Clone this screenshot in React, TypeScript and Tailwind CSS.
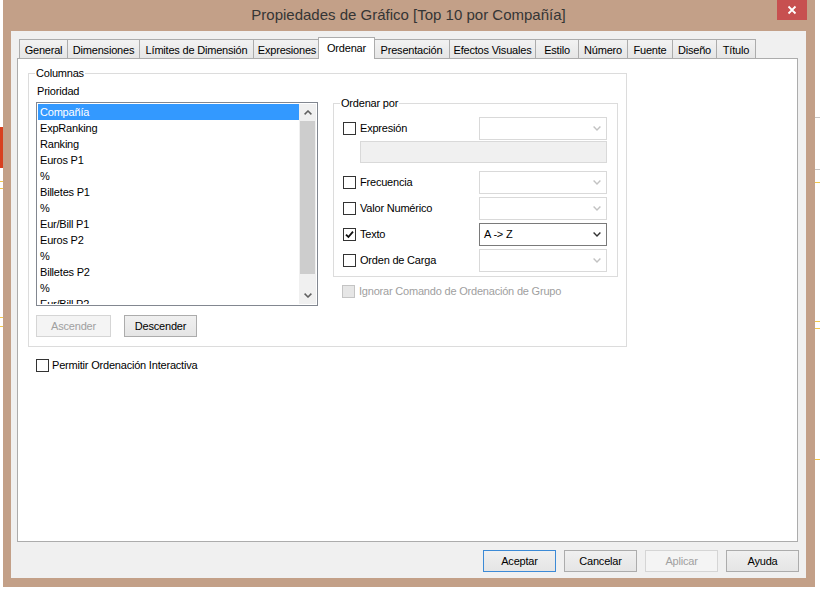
import React from "react";

const tabs: { label: string; w: string; active?: boolean; last?: boolean }[] = [
  { label: "General", w: "w-[48px]" },
  { label: "Dimensiones", w: "w-[72px]" },
  { label: "Límites de Dimensión", w: "w-[114px]" },
  { label: "Expresiones", w: "w-[67px]" },
  { label: "Ordenar", w: "w-[57px]", active: true },
  { label: "Presentación", w: "w-[76px]" },
  { label: "Efectos Visuales", w: "w-[86px]" },
  { label: "Estilo", w: "w-[43px]" },
  { label: "Número", w: "w-[49px]" },
  { label: "Fuente", w: "w-[45px]" },
  { label: "Diseño", w: "w-[44px]" },
  { label: "Título", w: "w-[40px]", last: true },
];

const items = [
  "Compañía",
  "ExpRanking",
  "Ranking",
  "Euros P1",
  "%",
  "Billetes P1",
  "%",
  "Eur/Bill P1",
  "Euros P2",
  "%",
  "Billetes P2",
  "%",
  "Eur/Bill P2",
];

function Checkbox({ checked, disabled }: { checked?: boolean; disabled?: boolean }) {
  return (
    <span
      className={`w-[13px] h-[13px] border shrink-0 flex items-center justify-center ${
        disabled ? "border-[#c4c4c4] bg-[#e6e6e6]" : "border-[#333333] bg-white"
      }`}
    >
      {checked && (
        <svg width="9" height="9" viewBox="0 0 9 9">
          <path d="M1 4.6 L3.4 7 L8 1.6" stroke="#111" strokeWidth="1.8" fill="none" />
        </svg>
      )}
    </span>
  );
}

function Combo({ value, enabled }: { value?: string; enabled?: boolean }) {
  return (
    <div
      className={`w-[128px] h-[23px] bg-white border flex items-center justify-between pl-[4px] pr-[5px] ${
        enabled ? "border-[#7a7a7a]" : "border-[#d9d9d9]"
      }`}
    >
      <span>{value}</span>
      <svg width="8" height="5" viewBox="0 0 8 5">
        <path
          d="M0.6 0.6 L4 4 L7.4 0.6"
          stroke={enabled ? "#333" : "#c2c2c2"}
          strokeWidth="1.4"
          fill="none"
        />
      </svg>
    </div>
  );
}

function SortRow({ label, checked, value }: { label: string; checked?: boolean; value?: string }) {
  return (
    <div className="flex items-center justify-between h-[23px]">
      <div className="flex items-center gap-[4px]">
        <Checkbox checked={checked} />
        <span>{label}</span>
      </div>
      <Combo value={value} enabled={checked} />
    </div>
  );
}

function Btn({
  label,
  w,
  disabled,
  primary,
}: {
  label: string;
  w: string;
  disabled?: boolean;
  primary?: boolean;
}) {
  const cls = disabled
    ? "bg-[#f4f4f4] border-[#d5d5d5] text-[#a0a0a0]"
    : primary
    ? "bg-gradient-to-b from-[#f0f0f0] to-[#e5e5e5] border-[#3c8ad6] text-black"
    : "bg-gradient-to-b from-[#f0f0f0] to-[#e5e5e5] border-[#acacac] text-black";
  return (
    <div className={`${w} h-[22px] border flex items-center justify-center ${cls}`}>{label}</div>
  );
}

export default function App() {
  return (
    <div className="w-[820px] h-[589px] bg-white flex overflow-hidden font-['Liberation_Sans',Arial,sans-serif] text-[11px] tracking-[-0.2px] text-black">
      {/* left sliver of the page behind */}
      <div className="w-[3px] shrink-0 flex flex-col">
        <div className="h-[127px]" />
        <div className="h-[41px] bg-[#d8401f]" />
        <div className="h-[13px]" />
        <div className="h-[1px] bg-[#f2c94c]" />
        <div className="h-[6px]" />
        <div className="h-[1px] bg-[#f2c94c]" />
        <div className="h-[128px]" />
        <div className="h-[1px] bg-[#f2c94c]" />
        <div className="h-[8px]" />
        <div className="h-[1px] bg-[#f2c94c]" />
      </div>

      {/* dialog window */}
      <div className="relative w-[812px] h-[587px] shrink-0 bg-[#c3a088] flex flex-col pl-[8px] pr-[9px] pb-[9px]">
        <div className="h-[31px] flex items-center justify-center text-[15px] tracking-normal text-[#353535]">
          Propiedades de Gráfico [Top 10 por Compañía]
        </div>
        <div className="absolute top-0 right-[8px] w-[30px] h-[20px] bg-[#c75050] flex items-center justify-center">
          <svg width="10" height="10" viewBox="0 0 10 10">
            <path d="M1.5 1.5 L8.5 8.5 M8.5 1.5 L1.5 8.5" stroke="#fff" strokeWidth="1.8" />
          </svg>
        </div>

        {/* client area */}
        <div className="flex-1 bg-[#f0f0f0] flex flex-col pt-[6px] pl-[6px] pr-[8px] pb-[6px]">
          {/* tabs */}
          <div className="h-[21px] flex items-end pl-[2px] relative z-10">
            {tabs.map((t, i) =>
              t.active ? (
                <div
                  key={i}
                  className={`${t.w} h-[22px] -mb-[1px] -mx-[2px] relative z-10 bg-white border border-b-0 border-[#acacac] flex justify-center pt-[4px] leading-[13px]`}
                >
                  {t.label}
                </div>
              ) : (
                <div
                  key={i}
                  className={`${t.w} h-[19px] border-t border-l ${
                    t.last ? "border-r" : ""
                  } border-[#acacac] bg-gradient-to-b from-[#f2f2f2] to-[#e6e6e6] flex items-center justify-center pt-[2px]`}
                >
                  {t.label}
                </div>
              )
            )}
          </div>

          {/* tab page */}
          <div className="h-[484px] bg-white border border-[#acacac] pt-[8px] pl-[10px]">
            <fieldset className="w-[599px] border border-[#dcdcdc] pl-[7px] pr-[8px] pt-[5px] pb-[9px]">
              <legend className="-ml-[1px] px-[1px] leading-[13px]">Columnas</legend>
              <div className="flex items-start gap-[15px]">
                {/* left column */}
                <div className="w-[282px] flex flex-col">
                  <div className="h-[13px] leading-[13px] pl-[1px]">Prioridad</div>
                  <div className="mt-[4px] h-[204px] border border-[#828790] bg-white p-[1px] flex">
                    <div className="flex-1 overflow-hidden">
                      {items.map((it, i) => (
                        <div
                          key={i}
                          className={`h-[16px] leading-[16px] pl-[2px] whitespace-nowrap ${
                            i === 0 ? "bg-[#3399ff] text-white" : ""
                          }`}
                        >
                          {it}
                        </div>
                      ))}
                    </div>
                    <div className="w-[17px] bg-[#f0f0f0] flex flex-col">
                      <div className="h-[17px] flex items-center justify-center">
                        <svg width="8" height="5" viewBox="0 0 8 5">
                          <path d="M0.6 4.4 L4 1 L7.4 4.4" stroke="#606060" strokeWidth="1.5" fill="none" />
                        </svg>
                      </div>
                      <div className="h-[153px] mx-[1px] bg-[#cdcdcd]" />
                      <div className="flex-1" />
                      <div className="h-[17px] flex items-center justify-center">
                        <svg width="8" height="5" viewBox="0 0 8 5">
                          <path d="M0.6 0.6 L4 4 L7.4 0.6" stroke="#606060" strokeWidth="1.5" fill="none" />
                        </svg>
                      </div>
                    </div>
                  </div>
                  <div className="mt-[9px] flex gap-[13px]">
                    <Btn label="Ascender" w="w-[75px]" disabled />
                    <Btn label="Descender" w="w-[73px]" />
                  </div>
                </div>

                {/* right column */}
                <div className="w-[285px] mt-[12px] flex flex-col">
                  <fieldset className="border border-[#dcdcdc] pl-[9px] pr-[10px] pt-[7px] pb-[4px]">
                    <legend className="-ml-[3px] px-[1px] leading-[13px]">Ordenar por</legend>
                    <SortRow label="Expresión" />
                    <div className="ml-[17px] mt-[1px] h-[22px] bg-[#f0f0f0] border border-[#d9d9d9]" />
                    <div className="mt-[8px]">
                      <SortRow label="Frecuencia" />
                    </div>
                    <div className="mt-[3px]">
                      <SortRow label="Valor Numérico" />
                    </div>
                    <div className="mt-[3px]">
                      <SortRow label="Texto" checked value="A -> Z" />
                    </div>
                    <div className="mt-[3px]">
                      <SortRow label="Orden de Carga" />
                    </div>
                  </fieldset>
                  <div className="mt-[6px] pl-[9px] flex items-center gap-[4px] text-[#a0a0a0]">
                    <Checkbox disabled />
                    <span>Ignorar Comando de Ordenación de Grupo</span>
                  </div>
                </div>
              </div>
            </fieldset>

            <div className="mt-[10px] ml-[8px] flex items-center gap-[3px]">
              <Checkbox />
              <span>Permitir Ordenación Interactiva</span>
            </div>
          </div>

          {/* bottom buttons */}
          <div className="mt-[8px] -mr-[1px] flex justify-end gap-[8px]">
            <Btn label="Aceptar" w="w-[73px]" primary />
            <Btn label="Cancelar" w="w-[73px]" />
            <Btn label="Aplicar" w="w-[73px]" disabled />
            <Btn label="Ayuda" w="w-[73px]" />
          </div>
        </div>
      </div>

      {/* right sliver of the page behind */}
      <div className="w-[5px] shrink-0 flex flex-col">
        <div className="h-[117px]" />
        <div className="h-[1px] bg-[#c8c8c8]" />
        <div className="h-[51px]" />
        <div className="h-[1px] bg-[#c8c8c8]" />
        <div className="h-[12px]" />
        <div className="h-[1px] bg-[#f2c94c]" />
        <div className="h-[138px]" />
        <div className="h-[1px] bg-[#f2c94c]" />
        <div className="h-[6px]" />
        <div className="h-[1px] bg-[#f2c94c]" />
        <div className="h-[130px]" />
        <div className="h-[1px] bg-[#f2c94c]" />
      </div>
    </div>
  );
}
